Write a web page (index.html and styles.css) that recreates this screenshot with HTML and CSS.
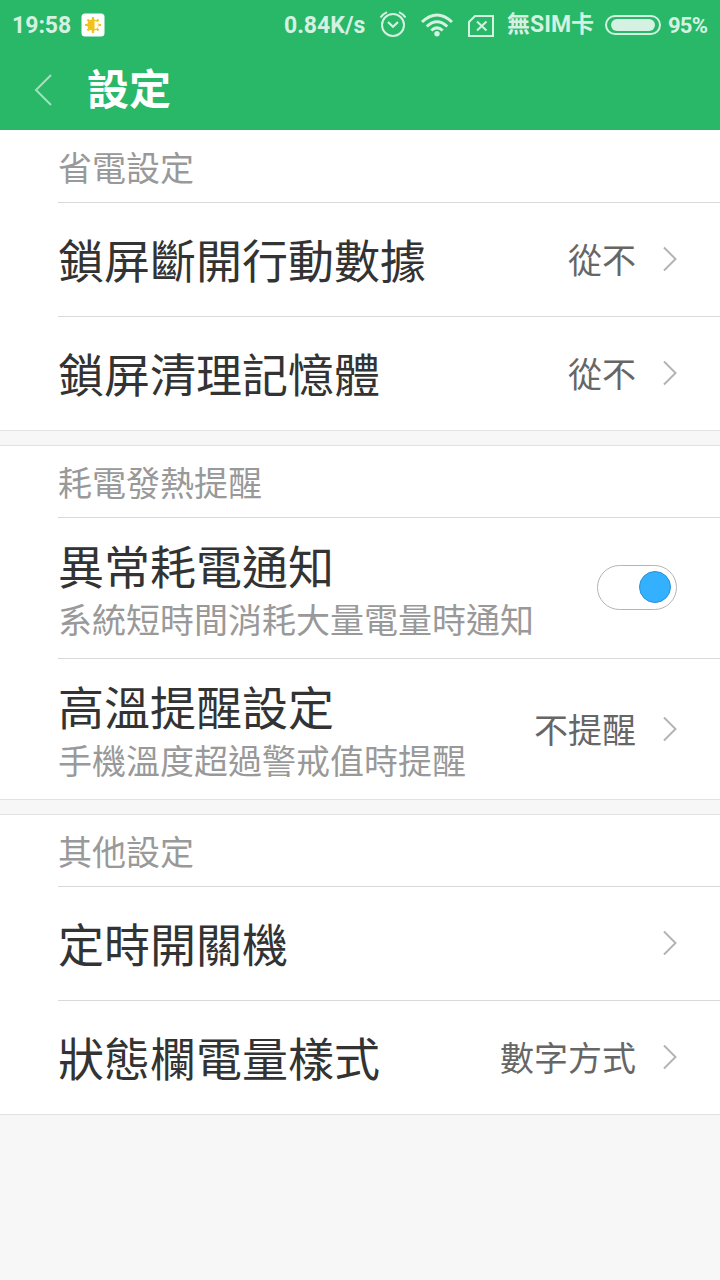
FILE: index.html
```html
<!DOCTYPE html>
<html lang="zh-Hant">
<head>
    <meta charset="UTF-8">
    <meta name="viewport" content="width=device-width, initial-scale=1.0">
    <title>設定</title>
    <link rel="stylesheet" href="styles.css">
</head>
<body>
    <header class="header">
        <div class="status-bar">
            <span class="time">19:58</span>
            <svg class="app-icon" width="24" height="24" viewBox="0 0 24 24">
                <rect x="0.5" y="0.5" width="23" height="23" rx="3.5" fill="#fff"/>
                <path d="M12 4v16M4 12h16M6.500 6.500l11 11M17.500 6.500l-11 11" stroke="#ecc21c" stroke-width="2.200"/>
                <circle cx="12" cy="12" r="5.800" fill="#f3c118"/>
                <path d="M13.500 8a4 4 0 0 1 0 8z" fill="#fffaf0"/>
            </svg>
            <span class="speed">0.84K/s</span>
            <svg class="alarm" width="28" height="28" viewBox="0 0 28 28" fill="none" stroke="currentColor" stroke-width="2">
                <circle cx="14" cy="15" r="11"/>
                <path d="M9 12l5 4.800 5-4.800" stroke-width="2.200"/>
                <path d="M1.500 7.500Q4 4 8 2.200M20 2.200Q24 4 26.500 7.500"/>
            </svg>
            <svg class="wifi" width="32" height="24" viewBox="0 0 32 24" fill="none" stroke="currentColor" stroke-width="3">
                <path d="M1 9Q16-5 31 9M5.700 13.500Q16 4 26.300 13.500M10.300 17.500Q16 12.300 21.700 17.500"/>
                <circle cx="16" cy="20.800" r="2.700" fill="currentColor" stroke="none"/>
            </svg>
            <svg class="sim" width="26" height="22" viewBox="0 0 26 22" fill="none" stroke="currentColor" stroke-width="2">
                <path d="M7 1h18v20H1V7z"/>
                <path d="M9 6.500l9.500 9M18.500 6.500l-9.500 9"/>
            </svg>
            <span class="carrier">無SIM卡</span>
            <span class="battery"><span class="battery-level"></span></span>
            <span class="percent">95%</span>
        </div>
        <div class="title-bar">
            <svg class="back" width="18" height="32" viewBox="0 0 18 32" fill="none" stroke="currentColor" stroke-width="2">
                <path d="M17 1L2 16l15 15"/>
            </svg>
            <h1>設定</h1>
        </div>
    </header>

    <section class="group">
        <h2>省電設定</h2>
        <div class="row">
            <div class="label">鎖屏斷開行動數據</div>
            <span class="value">從不</span>
            <svg class="arrow" viewBox="0 0 15 26"><path d="M1 1.500L12.500 13 1 24.500"/></svg>
        </div>
        <div class="row">
            <div class="label">鎖屏清理記憶體</div>
            <span class="value">從不</span>
            <svg class="arrow" viewBox="0 0 15 26"><path d="M1 1.500L12.500 13 1 24.500"/></svg>
        </div>
    </section>

    <section class="group">
        <h2>耗電發熱提醒</h2>
        <div class="row tall">
            <div class="label">異常耗電通知<p>系統短時間消耗大量電量時通知</p></div>
            <span class="switch"><span class="knob"></span></span>
        </div>
        <div class="row tall">
            <div class="label">高溫提醒設定<p>手機溫度超過警戒值時提醒</p></div>
            <span class="value">不提醒</span>
            <svg class="arrow" viewBox="0 0 15 26"><path d="M1 1.500L12.500 13 1 24.500"/></svg>
        </div>
    </section>

    <section class="group">
        <h2>其他設定</h2>
        <div class="row">
            <div class="label">定時開關機</div>
            <svg class="arrow" viewBox="0 0 15 26"><path d="M1 1.500L12.500 13 1 24.500"/></svg>
        </div>
        <div class="row">
            <div class="label">狀態欄電量樣式</div>
            <span class="value">數字方式</span>
            <svg class="arrow" viewBox="0 0 15 26"><path d="M1 1.500L12.500 13 1 24.500"/></svg>
        </div>
    </section>
</body>
</html>
```

FILE: styles.css
```css
* {
    box-sizing: border-box;
}
body {
    margin: 0;
    background: #f7f7f7;
    font-family: Roboto, 'Noto Sans CJK SC', sans-serif;
    color: #333;
}
h1, h2, p {
    margin: 0;
    font-weight: 400;
}
svg {
    flex: none;
}
.header {
    height: 130px;
    background: #28b868;
    color: #fff;
}
.status-bar {
    display: flex;
    align-items: center;
    height: 50px;
    padding: 0 12px;
    font-size: 23px;
    font-weight: 700;
    line-height: 50px;
    white-space: nowrap;
    color: #d4f1e1;
}
.time {
    width: 69px;
    padding-top: 2px;
}
.speed {
    width: 95px;
    margin-left: 179px;
    padding-top: 2px;
}
.alarm {
    margin-bottom: 3px;
}
.wifi {
    margin-left: 14px;
    margin-bottom: 1px;
}
.sim {
    margin-left: 15px;
    margin-top: 1px;
}
.carrier {
    width: 98px;
    margin-left: 13px;
}
.battery {
    flex: none;
    width: 56px;
    height: 20px;
    padding: 2px 4px;
    border: 2px solid currentColor;
    border-radius: 10px;
}
.battery-level {
    display: block;
    height: 12px;
    border-radius: 6px;
    background: currentColor;
}
.percent {
    margin-left: 7px;
    padding-top: 2px;
    font-size: 22px;
    letter-spacing: -0.8px;
}
.title-bar {
    display: flex;
    align-items: center;
    height: 80px;
    padding-left: 34px;
}
.back {
    color: #a5dfbf;
}
h1 {
    margin-left: 35px;
    padding-top: 2px;
    font-size: 42px;
    font-weight: 700;
    line-height: 80px;
}
.group {
    margin-bottom: 14px;
    background: #fff;
    border-top: 1px solid #e2e2e2;
    border-bottom: 1px solid #e2e2e2;
}
.header + .group {
    border-top-color: #fff;
}
h2 {
    height: 71px;
    padding-left: 58px;
    font-size: 34px;
    line-height: 76px;
    color: #999;
}
.row {
    display: flex;
    align-items: center;
    height: 114px;
    margin-left: 58px;
    padding-right: 42px;
    border-top: 1px solid #d9d9d9;
}
.row.tall {
    height: 141px;
}
.label {
    flex: 1;
    padding-top: 4px;
    font-size: 46px;
    line-height: 56px;
    white-space: nowrap;
}
.tall .label {
    padding-top: 9px;
}
.label p {
    font-size: 34px;
    line-height: 50px;
    color: #999;
}
.value {
    padding-top: 3px;
    font-size: 34px;
    line-height: 50px;
    color: #666;
}
.arrow {
    width: 15px;
    height: 26px;
    margin-left: 27px;
    margin-bottom: 1px;
    fill: none;
    stroke: #b3b3b3;
    stroke-width: 2;
}
.switch {
    width: 80px;
    height: 45px;
    margin-right: 1px;
    margin-bottom: 2px;
    padding: 5px;
    border: 1px solid #b5b5b5;
    border-radius: 23px;
}
.knob {
    display: block;
    width: 32px;
    height: 32px;
    margin-left: auto;
    border: 1px solid #2a91dc;
    border-radius: 50%;
    background: #33b1ff;
}
```
